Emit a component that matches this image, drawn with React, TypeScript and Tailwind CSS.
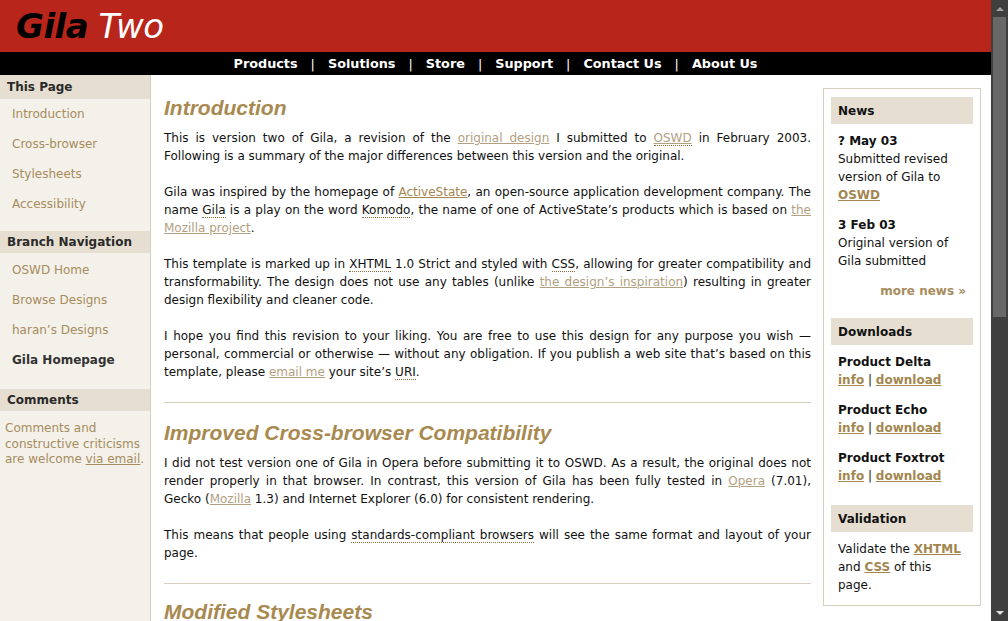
import React from "react";

const font = "font-['DejaVu_Sans',Verdana,sans-serif]";

const navLinks = ["Products", "Solutions", "Store", "Support", "Contact Us", "About Us"];

const thisPage = ["Introduction", "Cross-browser", "Stylesheets", "Accessibility"];
const branchNav = ["OSWD Home", "Browse Designs", "haran’s Designs"];

const downloads = ["Product Delta", "Product Echo", "Product Foxtrot"];

function A({ children, visited }: { children: React.ReactNode; visited?: boolean }) {
  return (
    <a href="#" className={visited ? "text-[#b3a081] underline" : "text-[#a3864f] underline"}>
      {children}
    </a>
  );
}

function Abbr({ children }: { children: React.ReactNode }) {
  return <span className="border-b border-dotted border-[#8a6d3b]">{children}</span>;
}

function SideHead({ children, className }: { children: React.ReactNode; className: string }) {
  return (
    <h3 className={`flex items-center bg-[#e6dfd1] px-[7px] font-bold text-[#2a2a2a] ${className}`}>
      {children}
    </h3>
  );
}

function BoxHead({ children }: { children: React.ReactNode }) {
  return (
    <h3 className="flex h-[27px] items-center bg-[#e6dfd1] px-[7px] font-bold text-[#111]">
      {children}
    </h3>
  );
}

function Heading({ children }: { children: React.ReactNode }) {
  return (
    <h2 className="font-['Liberation_Sans',Arial,sans-serif] text-[21px] font-bold italic leading-[26px] text-[#a8894f]">
      {children}
    </h2>
  );
}

export default function App() {
  return (
    <div className={`flex h-screen overflow-hidden bg-white ${font} text-[12px] text-[#111]`}>
      <div className="flex min-w-0 flex-1 flex-col">
        {/* Header */}
        <header className="flex h-[52px] shrink-0 items-center bg-[#b8261b] px-[16px]">
          <h1 className="text-[34px] italic leading-none tracking-[-0.5px]">
            <span className="font-bold text-black">Gila</span>{" "}
            <span className="text-white">Two</span>
          </h1>
        </header>

        {/* Nav */}
        <nav className="flex h-[23px] shrink-0 items-center justify-center bg-black text-[12.8px] font-bold text-white">
          {navLinks.map((l, i) => (
            <React.Fragment key={l}>
              {i > 0 && <span className="px-[13px] font-normal">|</span>}
              <a href="#">{l}</a>
            </React.Fragment>
          ))}
        </nav>

        <div className="flex min-h-0 flex-1">
          {/* Left sidebar */}
          <aside className="w-[151px] shrink-0 border-r border-[#d6cfbe] bg-[#f3f1ea]">
            <SideHead className="h-[24px]">This Page</SideHead>
            <ul>
              {thisPage.map((t) => (
                <li key={t} className="flex h-[30px] items-center px-[12px] text-[#a88c5d]">
                  {t}
                </li>
              ))}
            </ul>
            <SideHead className="mt-[12px] h-[22px]">Branch Navigation</SideHead>
            <ul className="pt-[2px]">
              {branchNav.map((t) => (
                <li key={t} className="flex h-[30px] items-center px-[12px] text-[#a88c5d]">
                  {t}
                </li>
              ))}
              <li className="flex h-[30px] items-center px-[12px] font-bold text-[#333]">Gila Homepage</li>
            </ul>
            <SideHead className="mt-[14px] h-[22px]">Comments</SideHead>
            <p className="px-[5px] pt-[10px] leading-[15.5px] text-[#a88c5d]">
              Comments and constructive criticisms are welcome{" "}
              <span className="underline">via email</span>.
            </p>
          </aside>

          {/* Main content */}
          <main className="min-w-0 flex-1 pl-[13px] pr-[12px] pt-[20px] leading-[18px] text-justify">
            <Heading>Introduction</Heading>
            <p className="mt-[8px]">
              This is version two of Gila, a revision of the <A visited>original design</A> I submitted to{" "}
              <A visited>
                <Abbr>OSWD</Abbr>
              </A>{" "}
              in February 2003. Following is a summary of the major differences between this version and the
              original.
            </p>
            <p className="mt-[18px]">
              Gila was inspired by the homepage of <A>ActiveState</A>, an open-source application development
              company. The name <Abbr>Gila</Abbr> is a play on the word <Abbr>Komodo</Abbr>, the name of one of
              ActiveState’s products which is based on <A visited>the Mozilla project</A>.
            </p>
            <p className="mt-[18px]">
              This template is marked up in <Abbr>XHTML</Abbr> 1.0 Strict and styled with <Abbr>CSS</Abbr>,
              allowing for greater compatibility and transformability. The design does not use any tables (unlike{" "}
              <A visited>the design’s inspiration</A>) resulting in greater design flexibility and cleaner code.
            </p>
            <p className="mt-[18px]">
              I hope you find this revision to your liking. You are free to use this design for any purpose you
              wish — personal, commercial or otherwise — without any obligation. If you publish a web site that’s
              based on this template, please <A visited>email me</A> your site’s <Abbr>URI</Abbr>.
            </p>
            <hr className="mb-[17px] mt-[21px] border-t border-[#d6cfbe]" />
            <Heading>Improved Cross-browser Compatibility</Heading>
            <p className="mt-[8px]">
              I did not test version one of Gila in Opera before submitting it to OSWD. As a result, the original
              does not render properly in that browser. In contrast, this version of Gila has been fully tested in{" "}
              <A visited>Opera</A> (7.01), Gecko (<A visited>Mozilla</A> 1.3) and Internet Explorer (6.0) for
              consistent rendering.
            </p>
            <p className="mt-[18px]">
              This means that people using <Abbr>standards-compliant browsers</Abbr> will see the same format and
              layout of your page.
            </p>
            <hr className="mb-[15px] mt-[21px] border-t border-[#d6cfbe]" />
            <Heading>Modified Stylesheets</Heading>
          </main>

          {/* Right sidebar */}
          <div className="w-[168px] shrink-0 pr-[10px] pt-[13px]">
            <div className="border border-[#d6cfbe] px-[7px] pb-[11px] pt-[8px] leading-[18px]">
              <BoxHead>News</BoxHead>
              <div className="px-[7px] pt-[8px]">
                <p className="font-bold">? May 03</p>
                <p>
                  Submitted revised version of Gila to{" "}
                  <a href="#" className="font-bold text-[#a3864f] underline">
                    OSWD
                  </a>
                </p>
                <p className="mt-[12px] font-bold">3 Feb 03</p>
                <p>Original version of Gila submitted</p>
                <p className="mt-[12px] text-right font-bold text-[#a88c5d]">
                  <a href="#">more news »</a>
                </p>
              </div>
              <div className="mt-[18px]">
                <BoxHead>Downloads</BoxHead>
              </div>
              <div className="px-[7px] pt-[8px]">
                {downloads.map((d, i) => (
                  <div key={d} className={i > 0 ? "mt-[12px]" : ""}>
                    <p className="font-bold">{d}</p>
                    <p>
                      <a href="#" className="font-bold text-[#a3864f] underline">
                        info
                      </a>{" "}
                      |{" "}
                      <a href="#" className="font-bold text-[#a3864f] underline">
                        download
                      </a>
                    </p>
                  </div>
                ))}
              </div>
              <div className="mt-[20px]">
                <BoxHead>Validation</BoxHead>
              </div>
              <p className="px-[7px] pt-[8px]">
                Validate the{" "}
                <a href="#" className="font-bold text-[#a3864f] underline">
                  XHTML
                </a>{" "}
                and{" "}
                <a href="#" className="font-bold text-[#a3864f] underline">
                  CSS
                </a>{" "}
                of this page.
              </p>
            </div>
          </div>
        </div>
      </div>

      {/* Scrollbar */}
      <div className="flex w-[17px] shrink-0 flex-col items-center bg-[#3f3f3f]">
        <div className="flex h-[17px] items-center justify-center">
          <div className="h-0 w-0 border-x-[4px] border-b-[4px] border-x-transparent border-b-[#a0a0a0]" />
        </div>
        <div className="h-[300px] w-[13px] bg-[#686868]" />
        <div className="flex-1" />
        <div className="flex h-[17px] items-center justify-center">
          <div className="h-0 w-0 border-x-[4px] border-t-[4px] border-x-transparent border-t-[#e0e0e0]" />
        </div>
      </div>
    </div>
  );
}
